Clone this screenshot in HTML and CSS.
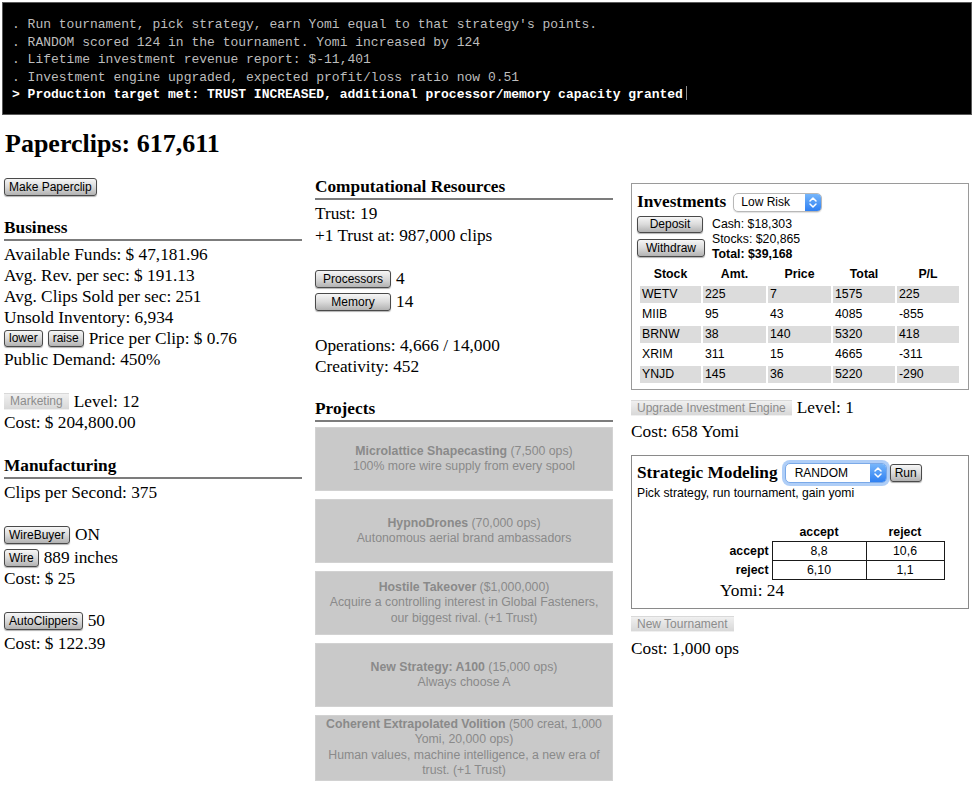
FILE: index.html
```html
<!DOCTYPE html>
<html lang="en">
<head>
<meta charset="utf-8">
<title>Paperclips</title>
<link rel="stylesheet" href="styles.css">
</head>
<body>
<div class="console">
  <div class="log">. Run tournament, pick strategy, earn Yomi equal to that strategy's points.</div>
  <div class="log">. RANDOM scored 124 in the tournament. Yomi increased by 124</div>
  <div class="log">. Lifetime investment revenue report: $-11,401</div>
  <div class="log">. Investment engine upgraded, expected profit/loss ratio now 0.51</div>
  <div class="log current">&gt; Production target met: TRUST INCREASED, additional processor/memory capacity granted<span class="cursor"></span></div>
</div>

<main class="page">
  <h2 class="clips">Paperclips: 617,611</h2>

  <div class="columns">
    <section class="col col-left">
      <div class="row"><button class="btn btn-18">Make Paperclip</button></div>

      <div class="head head-gap">Business</div>
      <div class="row">Available Funds: $ 47,181.96</div>
      <div class="row">Avg. Rev. per sec: $ 191.13</div>
      <div class="row">Avg. Clips Sold per sec: 251</div>
      <div class="row">Unsold Inventory: 6,934</div>
      <div class="row"><button class="btn btn-17">lower</button><button class="btn btn-17">raise</button><span>Price per Clip: $ 0.76</span></div>
      <div class="row">Public Demand: 450%</div>

      <div class="row sp"><button class="btn btn-17 disabled">Marketing</button><span>Level: 12</span></div>
      <div class="row">Cost: $ 204,800.00</div>

      <div class="head head-gap2">Manufacturing</div>
      <div class="row">Clips per Second: 375</div>

      <div class="row sp tall"><button class="btn btn-18">WireBuyer</button><span>ON</span></div>
      <div class="row"><button class="btn btn-18">Wire</button><span>889 inches</span></div>
      <div class="row">Cost: $ 25</div>

      <div class="row sp tall"><button class="btn btn-18">AutoClippers</button><span>50</span></div>
      <div class="row">Cost: $ 122.39</div>
    </section>

    <section class="col col-mid">
      <div class="head">Computational Resources</div>
      <div class="row">Trust: 19</div>
      <div class="row nudge">+1 Trust at: 987,000 clips</div>

      <div class="row sp row-23"><button class="btn btn-18 btn-wide">Processors</button><span>4</span></div>
      <div class="row row-23"><button class="btn btn-18 btn-wide">Memory</button><span>14</span></div>

      <div class="row sp nudge">Operations: 4,666 / 14,000</div>
      <div class="row">Creativity: 452</div>

      <div class="head head-proj">Projects</div>
      <div class="projects">
        <div class="project"><div><b>Microlattice Shapecasting</b> (7,500 ops)</div><div>100% more wire supply from every spool</div></div>
        <div class="project"><div><b>HypnoDrones</b> (70,000 ops)</div><div>Autonomous aerial brand ambassadors</div></div>
        <div class="project"><div><b>Hostile Takeover</b> ($1,000,000)</div><div>Acquire a controlling interest in Global Fasteners,<br>our biggest rival. (+1 Trust)</div></div>
        <div class="project"><div><b>New Strategy: A100</b> (15,000 ops)</div><div>Always choose A</div></div>
        <div class="project"><div><b>Coherent Extrapolated Volition</b> (500 creat, 1,000<br>Yomi, 20,000 ops)</div><div>Human values, machine intelligence, a new era of<br>trust. (+1 Trust)</div></div>
      </div>
    </section>

    <section class="col col-right">
      <div class="box invest">
        <div class="box-head">
          <span class="box-title">Investments</span>
          <div class="select select-risk">
            <span class="select-val">Low Risk</span>
            <span class="select-cap"><svg width="10" height="13" viewBox="0 0 10 13"><path d="M2 5 L5 2 L8 5 M2 8 L5 11 L8 8" fill="none" stroke="#fff" stroke-width="1.5" stroke-linecap="round" stroke-linejoin="round"/></svg></span>
          </div>
        </div>
        <div class="cash-row">
          <div class="cash-btns">
            <button class="btn btn-17 btn-dep">Deposit</button>
            <button class="btn btn-18 btn-wd">Withdraw</button>
          </div>
          <div class="cash-info">
            <div>Cash: $18,303</div>
            <div>Stocks: $20,865</div>
            <div class="bold">Total: $39,168</div>
          </div>
        </div>
        <table class="stocks">
          <thead>
            <tr><th>Stock</th><th>Amt.</th><th>Price</th><th>Total</th><th>P/L</th></tr>
          </thead>
          <tbody>
            <tr class="odd"><td>WETV</td><td>225</td><td>7</td><td>1575</td><td>225</td></tr>
            <tr><td>MIIB</td><td>95</td><td>43</td><td>4085</td><td>-855</td></tr>
            <tr class="odd"><td>BRNW</td><td>38</td><td>140</td><td>5320</td><td>418</td></tr>
            <tr><td>XRIM</td><td>311</td><td>15</td><td>4665</td><td>-311</td></tr>
            <tr class="odd"><td>YNJD</td><td>145</td><td>36</td><td>5220</td><td>-290</td></tr>
          </tbody>
        </table>
      </div>

      <div class="row upgrade-row"><button class="btn btn-16 disabled">Upgrade Investment Engine</button><span>Level: 1</span></div>
      <div class="row cost-row">Cost: 658 Yomi</div>

      <div class="box strat">
        <div class="box-head">
          <span class="box-title">Strategic Modeling</span>
          <div class="select select-strat">
            <span class="select-val">RANDOM</span>
            <span class="select-cap"><svg width="10" height="13" viewBox="0 0 10 13"><path d="M2 5 L5 2 L8 5 M2 8 L5 11 L8 8" fill="none" stroke="#fff" stroke-width="1.5" stroke-linecap="round" stroke-linejoin="round"/></svg></span>
          </div>
          <button class="btn btn-18 btn-run">Run</button>
        </div>
        <div class="strat-desc">Pick strategy, run tournament, gain yomi</div>
        <table class="payoff">
          <tr><th></th><th class="colh">accept</th><th class="colh">reject</th></tr>
          <tr><th class="lbl">accept</th><td class="c1">8,8</td><td class="c2">10,6</td></tr>
          <tr><th class="lbl">reject</th><td class="c1">6,10</td><td class="c2">1,1</td></tr>
        </table>
        <div class="yomi">Yomi: 24</div>
      </div>

      <div class="row tourn-row"><button class="btn btn-16 disabled">New Tournament</button></div>
      <div class="row cost2-row">Cost: 1,000 ops</div>
    </section>
  </div>
</main>
</body>
</html>
```

FILE: styles.css
```css
* {
  box-sizing: border-box;
}

body {
  margin: 0;
  background: #fff;
  color: #000;
  font-family: "Liberation Serif", "Times New Roman", serif;
  font-size: 17.3px;
}

/* console */
.console {
  margin: 2px 2px 0;
  height: 113px;
  background: #000;
  border: 1px solid #5a5a5a;
  padding: 13px 9px 9px;
  font-family: "Liberation Mono", "DejaVu Sans Mono", monospace;
  font-size: 13px;
  line-height: 17.5px;
  color: #bdbdbd;
  white-space: nowrap;
}

.console .current {
  color: #fff;
  font-weight: bold;
}

.cursor {
  display: inline-block;
  width: 1px;
  height: 14px;
  margin-left: 3px;
  background: #8a8a8a;
  vertical-align: -2px;
}

/* page */
.page {
  padding-left: 4px;
}

.clips {
  margin: 14px 0 17px 1px;
  font-size: 26px;
  line-height: 30px;
  font-weight: bold;
}

.columns {
  display: flex;
  align-items: flex-start;
}

.col-left {
  width: 298px;
  margin-right: 13px;
}

.col-mid {
  width: 298px;
  margin-right: 18px;
}

.col-right {
  width: 338px;
}

.row {
  display: flex;
  align-items: center;
  gap: 5px;
  height: 21px;
  line-height: 21px;
  white-space: nowrap;
}

.row.sp {
  margin-top: 21px;
}

.row.tall {
  margin-bottom: 2px;
}

.row.nudge {
  margin-top: 1px;
}

.row.sp.nudge {
  margin-top: 22px;
}

.row.row-23 {
  height: 23px;
}

.head {
  font-weight: bold;
  line-height: 21px;
  padding-bottom: 1px;
  border-bottom: 2px solid #7c7c7c;
  margin-bottom: 3px;
}

.head-gap {
  margin-top: 20px;
}

.head-gap2 {
  margin-top: 22px;
}

.head-proj {
  margin-top: 21px;
  margin-bottom: 5px;
}

/* buttons */
.btn {
  margin: 0;
  padding: 0 4px;
  font-family: "Liberation Sans", Arial, sans-serif;
  font-size: 12px;
  color: #000;
  border: 1px solid #4a4a4a;
  border-radius: 3px;
  background: linear-gradient(#f6f6f6, #dadada 50%, #b2b2b2);
  box-shadow: 0 1px 1px rgba(0, 0, 0, 0.3);
  white-space: nowrap;
}

.btn-16 {
  height: 16px;
  line-height: 14px;
}

.btn-17 {
  height: 17px;
  line-height: 15px;
}

.btn-18 {
  height: 18px;
  line-height: 16px;
}

.btn-wide {
  width: 76px;
}

.btn.disabled {
  border-color: transparent;
  border-radius: 0;
  background: linear-gradient(#f0f0f0, #d8d8d8);
  color: #8c8c8c;
  box-shadow: none;
  padding: 0 5px;
}

/* projects */
.projects {
  display: flex;
  flex-direction: column;
  gap: 8px;
}

.project {
  min-height: 64px;
  display: flex;
  flex-direction: column;
  justify-content: center;
  align-items: center;
  padding: 1px 2px;
  background: #c9c9c9;
  border: 1px solid #d2d2d2;
  color: #8a8a8a;
  font-family: "Liberation Sans", Arial, sans-serif;
  font-size: 12.3px;
  line-height: 15.4px;
  text-align: center;
  white-space: nowrap;
}

.project b {
  font-weight: bold;
}

/* boxes */
.box {
  border: 1px solid #9a9a9a;
}

.invest {
  margin-top: 7px;
  padding: 7px 5px 3px 5px;
}

.box-head {
  display: flex;
  align-items: center;
  height: 21px;
}

.box-title {
  font-weight: bold;
  line-height: 21px;
  margin-right: 7px;
}

.select {
  display: flex;
  height: 19px;
  border: 1px solid #b8b8b8;
  border-radius: 5px;
  overflow: hidden;
  background: #fff;
  font-family: "Liberation Sans", Arial, sans-serif;
  font-size: 12px;
  box-shadow: 0 1px 1px rgba(0, 0, 0, 0.12);
}

.select-risk {
  width: 89px;
  margin-top: 1px;
}

.select-val {
  flex: 1;
  padding-left: 7px;
  line-height: 17px;
}

.select-cap {
  width: 16px;
  display: flex;
  align-items: center;
  justify-content: center;
  background: linear-gradient(#76b6fb, #2f80f2);
}

.select-strat {
  width: 102px;
  height: 20px;
  margin-right: 3px;
  border-color: #7aa9e8;
  box-shadow: 0 0 0 3px rgba(110, 165, 240, 0.55);
}

.select-strat .select-val {
  padding-left: 9px;
  line-height: 18px;
}

.cash-row {
  display: flex;
  height: 50px;
}

.cash-btns {
  display: flex;
  flex-direction: column;
  align-items: flex-start;
  width: 75px;
}

.btn-dep {
  margin-top: 4px;
  width: 66px;
}

.btn-wd {
  margin-top: 6px;
  width: 68px;
}

.cash-info {
  padding-top: 5px;
  font-family: "Liberation Sans", Arial, sans-serif;
  font-size: 12.3px;
  line-height: 15px;
}

.bold {
  font-weight: bold;
}

.stocks {
  margin-left: 1px;
  border-spacing: 2px 3px;
  font-family: "Liberation Sans", Arial, sans-serif;
  font-size: 12.3px;
}

.stocks th {
  height: 18px;
  padding: 0;
  font-weight: bold;
  text-align: center;
}

.stocks td {
  height: 17px;
  padding: 0 2px;
  line-height: 17px;
  text-align: left;
}

.stocks th:nth-child(1), .stocks td:nth-child(1) { width: 61px; }
.stocks th:nth-child(2), .stocks td:nth-child(2) { width: 63px; }
.stocks th:nth-child(3), .stocks td:nth-child(3) { width: 63px; }
.stocks th:nth-child(4), .stocks td:nth-child(4) { width: 62px; }
.stocks th:nth-child(5), .stocks td:nth-child(5) { width: 62px; }

.stocks tr.odd td {
  background: #dcdcdc;
}

.upgrade-row {
  margin-top: 7px;
}

.cost-row {
  margin-top: 3px;
}

.strat {
  margin-top: 13px;
  padding: 6px 5px 7px 5px;
  border-color: #8a8a8a;
}

.btn-run {
  padding: 0 4px;
  width: 32px;
}

.strat-desc {
  margin-top: 2px;
  font-family: "Liberation Sans", Arial, sans-serif;
  font-size: 12.2px;
  line-height: 16px;
}

.payoff {
  margin: 22px 0 0 75px;
  border-collapse: collapse;
  font-family: "Liberation Sans", Arial, sans-serif;
  font-size: 12.3px;
}

.payoff th {
  padding: 0;
  font-weight: bold;
}

.payoff .colh {
  height: 18px;
  text-align: center;
}

.payoff .lbl {
  width: 60px;
  padding-right: 3px;
  text-align: right;
}

.payoff td {
  height: 19px;
  padding: 0;
  text-align: center;
  border: 1px solid #1a1a1a;
}

.payoff .c1 {
  width: 94px;
}

.payoff .c2 {
  width: 78px;
}

.yomi {
  margin-left: 83px;
  line-height: 21px;
}

.tourn-row {
  margin-top: 5px;
}

.cost2-row {
  margin-top: 3px;
}
```
